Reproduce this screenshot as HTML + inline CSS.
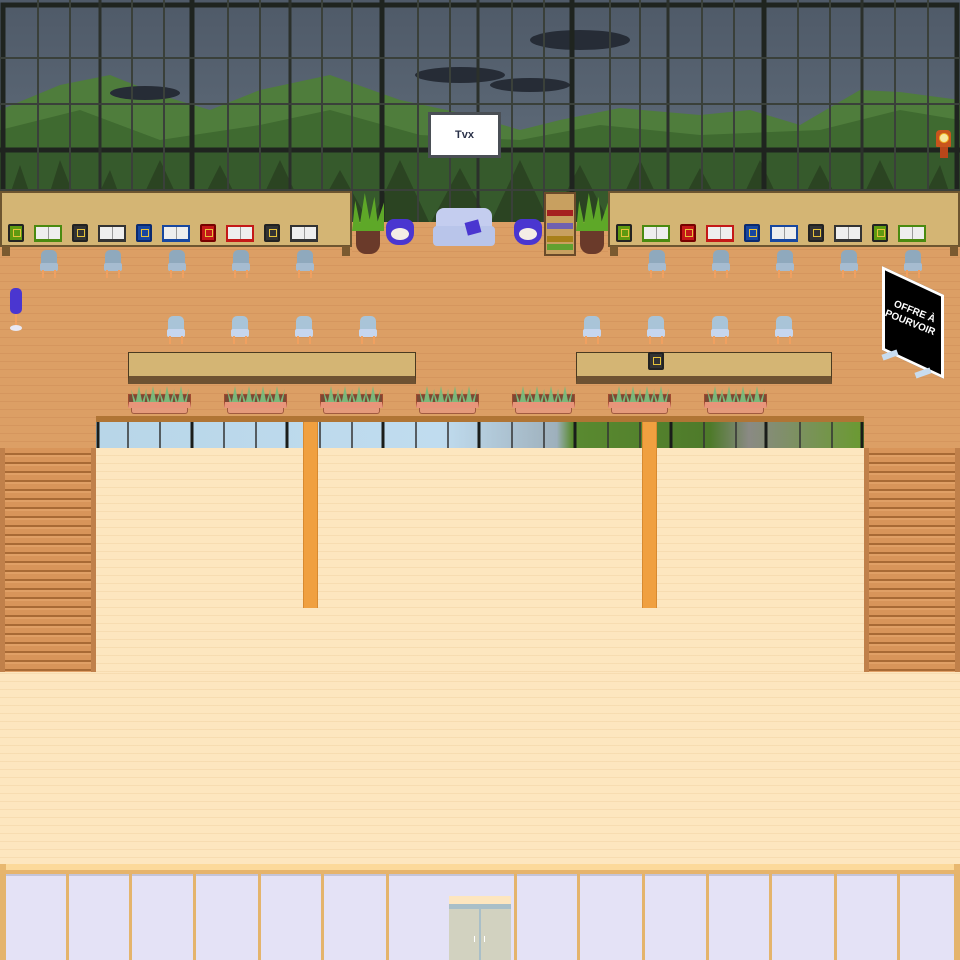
<!DOCTYPE html>
<html><head><meta charset="utf-8"><style>
*{margin:0;padding:0;box-sizing:border-box}
body{width:960px;height:960px;overflow:hidden;position:relative;background:#dc9f65;font-family:"Liberation Sans",sans-serif}
.a{position:absolute}
.floor{background-color:#dc9f65;background-image:repeating-linear-gradient(0deg,rgba(180,110,60,.18) 0 1px,transparent 1px 8px)}
.lfloor{background-color:#fde6bf;background-image:repeating-linear-gradient(0deg,rgba(235,200,150,.35) 0 1px,transparent 1px 8px)}
.desk{background:#d4b574;border:2px solid #6d5530}
.bk{position:absolute;top:224px;width:16px;height:18px;border:2px solid #222;border-radius:2px}
.bk::after{content:"";position:absolute;left:3px;top:3px;width:6px;height:6px;border:1px solid #e6c23a}
.ob{position:absolute;top:225px;width:28px;height:17px;background:#eee;border:2px solid #333;border-bottom-width:3px}
.ob::after{content:"";position:absolute;left:12px;top:0;width:1px;height:12px;background:#999}
.ch{position:absolute;width:18px;height:28px}
.ch i{position:absolute;left:1px;top:0;width:16px;height:16px;background:#8fa9bd;border-radius:5px 5px 2px 2px}
.ch b{position:absolute;left:0;top:13px;width:18px;height:8px;background:#a6bcd0;border-radius:2px}
.ch u{position:absolute;left:2px;top:20px;width:14px;height:8px;border-left:2px solid #f0a060;border-right:2px solid #f0a060}
.ch2 i{background:#a9c4d8}.ch2 b{background:#c6d6ef}
.pl{position:absolute;top:388px;width:63px;height:26px}
.pl .box{position:absolute;left:0;top:6px;width:63px;height:14px;background:#7a4a34;border:1px solid #a04a30;border-bottom:6px solid #e8957a}
.pl .bot{position:absolute;left:3px;top:20px;width:57px;height:6px;background:#e49a7c;border:1px solid #a05a40;border-top:none;border-radius:0 0 3px 3px}
.pl .lf{position:absolute;top:-2px;width:16px;height:16px;background:#7cb87a;clip-path:polygon(0 20%,30% 100%,50% 0,70% 100%,100% 15%,85% 100%,15% 100%)}
.pan{position:absolute;top:874px;height:86px;width:3px;background:#e4b46c}
</style></head><body>
<div class="a floor" style="left:0;top:220px;width:960px;height:230px"></div>

<svg class="a" style="left:0;top:0" width="960" height="224" viewBox="0 0 960 224">
<defs><linearGradient id="sk" x1="0" y1="0" x2="0" y2="1"><stop offset="0" stop-color="#4f5a68"/><stop offset="1" stop-color="#63707e"/></linearGradient></defs>
<rect width="960" height="224" fill="url(#sk)"/>
<path d="M0 110 L60 85 L110 75 L160 95 L210 110 L260 90 L330 75 L400 100 L470 115 L520 130 L560 120 L620 108 L700 115 L750 110 L800 125 L860 90 L900 92 L960 100 L960 224 L0 224Z" fill="#4f7d3c"/>
<path d="M0 130 L80 110 L160 140 L260 125 L330 110 L420 135 L520 140 L600 125 L700 135 L820 130 L900 110 L960 120 L960 224 L0 224Z" fill="#3f6a30"/>
<rect y="150" width="960" height="74" fill="#365a2c"/>
<path d="M0 224 L20 165 L40 224 L60 160 L85 224 L110 170 L130 224 L160 160 L190 224 L220 165 L250 224 L280 160 L310 224 L340 170 L370 224 L400 160 L430 224 L460 168 L490 224 L520 160 L550 224 L580 165 L610 224 L640 160 L670 224 L700 168 L730 224 L760 160 L790 224 L820 165 L850 224 L880 160 L910 224 L940 165 L960 224Z" fill="#2b4422"/>
<ellipse cx="145" cy="93" rx="35" ry="7" fill="#262c36"/>
<ellipse cx="580" cy="40" rx="50" ry="10" fill="#262c36"/>
<ellipse cx="460" cy="75" rx="45" ry="8" fill="#262c36"/>
<ellipse cx="530" cy="85" rx="40" ry="7" fill="#262c36"/>
<g fill="none" stroke="#1f241f" stroke-width="5">
<rect x="3" y="5" width="954" height="250"/>
<path d="M192 0V224M382 0V224M572 0V224M764 0V224M0 150H960"/>
</g>
<g fill="none" stroke="#2b302b" stroke-width="3">
<path d="M100 0V224M290 0V224M478 0V224M668 0V224M862 0V224"/>
</g>
<g fill="none" stroke="#3a403a" stroke-width="2">
<path d="M38 0V224M70 0V224M132 0V224M164 0V224M228 0V224M260 0V224M322 0V224M352 0V224M418 0V224M450 0V224M512 0V224M544 0V224M610 0V224M640 0V224M702 0V224M734 0V224M798 0V224M830 0V224M895 0V224M928 0V224M0 58H960M0 104H960M0 190H960"/>
</g>
</svg>

<!-- TV -->
<div class="a" style="left:428px;top:112px;width:73px;height:46px;background:#fff;border:3px solid #4a4f55;text-align:center;font-size:11px;font-weight:bold;color:#2a3148;line-height:40px">Tvx</div>
<!-- clock -->
<div class="a" style="left:936px;top:130px;width:15px;height:17px;background:#c9541c;border-radius:4px 4px 1px 1px"></div>
<div class="a" style="left:939px;top:133px;width:10px;height:10px;background:#f6e6a0;border-radius:50%;border:1px solid #f0b020"></div>
<div class="a" style="left:940px;top:147px;width:8px;height:11px;background:#b8461a"></div>

<div class="a floor" style="left:352px;top:222px;width:256px;height:30px"></div>

<!-- desks -->
<div class="a desk" style="left:0;top:191px;width:352px;height:56px"></div>
<div class="a" style="left:2px;top:246px;width:8px;height:10px;background:#7a5a30"></div>
<div class="a" style="left:342px;top:246px;width:8px;height:10px;background:#7a5a30"></div>
<div class="a desk" style="left:608px;top:191px;width:352px;height:56px"></div>
<div class="a" style="left:610px;top:246px;width:8px;height:10px;background:#7a5a30"></div>
<div class="a" style="left:950px;top:246px;width:8px;height:10px;background:#7a5a30"></div>

<div class="bk" style="left:8px;background:#5f9a10"></div>
<div class="ob" style="left:34px;border-color:#4a8a10"></div>
<div class="bk" style="left:72px;background:#333"></div>
<div class="ob" style="left:98px;border-color:#333"></div>
<div class="bk" style="left:136px;background:#1747a0;border-color:#0a2a70"></div>
<div class="ob" style="left:162px;border-color:#1747a0"></div>
<div class="bk" style="left:200px;background:#c41818;border-color:#700"></div>
<div class="ob" style="left:226px;border-color:#c41818"></div>
<div class="bk" style="left:264px;background:#333"></div>
<div class="ob" style="left:290px;border-color:#333"></div>

<div class="bk" style="left:616px;background:#5f9a10"></div>
<div class="ob" style="left:642px;border-color:#4a8a10"></div>
<div class="bk" style="left:680px;background:#c41818;border-color:#700"></div>
<div class="ob" style="left:706px;border-color:#c41818"></div>
<div class="bk" style="left:744px;background:#1747a0;border-color:#0a2a70"></div>
<div class="ob" style="left:770px;border-color:#1747a0"></div>
<div class="bk" style="left:808px;background:#333"></div>
<div class="ob" style="left:834px;border-color:#333"></div>
<div class="bk" style="left:872px;background:#5f9a10"></div>
<div class="ob" style="left:898px;border-color:#4a8a10"></div>

<!-- plants, chairs, sofa, bookcase -->
<div class="a" style="left:356px;top:228px;width:24px;height:26px;background:#6a3a2a;border-radius:3px 3px 10px 10px"></div>
<div class="a" style="left:352px;top:193px;width:32px;height:38px;background:#5ea828;clip-path:polygon(0 100%,10% 20%,25% 80%,40% 0,55% 70%,70% 10%,80% 75%,100% 25%,100% 100%)"></div>
<div class="a" style="left:580px;top:228px;width:24px;height:26px;background:#6a3a2a;border-radius:3px 3px 10px 10px"></div>
<div class="a" style="left:576px;top:193px;width:32px;height:38px;background:#5ea828;clip-path:polygon(0 100%,10% 20%,25% 80%,40% 0,55% 70%,70% 10%,80% 75%,100% 25%,100% 100%)"></div>
<div class="a" style="left:386px;top:219px;width:28px;height:26px;background:#4a36d0;border-radius:8px 8px 12px 12px"></div>
<div class="a" style="left:391px;top:228px;width:18px;height:12px;background:#f4eee6;border-radius:50%"></div>
<div class="a" style="left:514px;top:219px;width:28px;height:26px;background:#4a36d0;border-radius:8px 8px 12px 12px"></div>
<div class="a" style="left:519px;top:228px;width:18px;height:12px;background:#f4eee6;border-radius:50%"></div>
<div class="a" style="left:436px;top:208px;width:56px;height:20px;background:#c4cdef;border-radius:8px 8px 2px 2px"></div>
<div class="a" style="left:433px;top:226px;width:62px;height:20px;background:#b9c5ea;border-radius:4px"></div>
<div class="a" style="left:466px;top:221px;width:14px;height:13px;background:#4a36d0;transform:rotate(-15deg)"></div>
<div class="a" style="left:544px;top:192px;width:32px;height:64px;background:#c8a060;border:2px solid #6a4a2a"></div>
<div class="a" style="left:547px;top:210px;width:26px;height:6px;background:#a52020"></div>
<div class="a" style="left:547px;top:223px;width:26px;height:6px;background:#7060b0"></div>
<div class="a" style="left:547px;top:236px;width:26px;height:6px;background:#a8801a"></div>
<div class="a" style="left:547px;top:244px;width:26px;height:6px;background:#60a030"></div>

<div class="ch" style="left:40px;top:250px"><i></i><b></b><u></u></div>
<div class="ch" style="left:104px;top:250px"><i></i><b></b><u></u></div>
<div class="ch" style="left:168px;top:250px"><i></i><b></b><u></u></div>
<div class="ch" style="left:232px;top:250px"><i></i><b></b><u></u></div>
<div class="ch" style="left:296px;top:250px"><i></i><b></b><u></u></div>
<div class="ch" style="left:648px;top:250px"><i></i><b></b><u></u></div>
<div class="ch" style="left:712px;top:250px"><i></i><b></b><u></u></div>
<div class="ch" style="left:776px;top:250px"><i></i><b></b><u></u></div>
<div class="ch" style="left:840px;top:250px"><i></i><b></b><u></u></div>
<div class="ch" style="left:904px;top:250px"><i></i><b></b><u></u></div>

<div class="ch ch2" style="left:167px;top:316px"><i></i><b></b><u></u></div>
<div class="ch ch2" style="left:231px;top:316px"><i></i><b></b><u></u></div>
<div class="ch ch2" style="left:295px;top:316px"><i></i><b></b><u></u></div>
<div class="ch ch2" style="left:359px;top:316px"><i></i><b></b><u></u></div>
<div class="ch ch2" style="left:583px;top:316px"><i></i><b></b><u></u></div>
<div class="ch ch2" style="left:647px;top:316px"><i></i><b></b><u></u></div>
<div class="ch ch2" style="left:711px;top:316px"><i></i><b></b><u></u></div>
<div class="ch ch2" style="left:775px;top:316px"><i></i><b></b><u></u></div>

<!-- purple stand -->
<div class="a" style="left:10px;top:288px;width:12px;height:26px;background:#4a36d0;border-radius:5px"></div>
<div class="a" style="left:15px;top:314px;width:2px;height:12px;background:#f0a060"></div>
<div class="a" style="left:10px;top:325px;width:12px;height:6px;background:#e8e8f4;border-radius:50%"></div>

<!-- lower desks -->
<div class="a" style="left:128px;top:352px;width:288px;height:32px;background:#d4b574;border:1px solid #4a3a20;border-bottom:8px solid #6e5232"></div>
<div class="a" style="left:576px;top:352px;width:256px;height:32px;background:#d4b574;border:1px solid #4a3a20;border-bottom:8px solid #6e5232"></div>
<div class="bk" style="left:648px;top:352px;background:#333"></div>

<!-- sign -->
<div class="a" style="left:882px;top:266px;width:62px;height:84px;background:#000;border:3px solid #fff;transform:skewY(25deg);transform-origin:0 0"></div>
<div class="a" style="left:878px;top:306px;width:68px;color:#fff;font-size:10px;font-weight:bold;text-align:center;line-height:12px;transform:rotate(22deg)">OFFRE À<br>POURVOIR</div>
<div class="a" style="left:882px;top:352px;width:16px;height:6px;background:#c8dcef;transform:rotate(-20deg)"></div>
<div class="a" style="left:915px;top:370px;width:16px;height:6px;background:#c8dcef;transform:rotate(-20deg)"></div>

<!-- planters -->
<div class="pl" style="left:128px"><div class="box"></div><div class="bot"></div><i class="lf" style="left:3px"></i><i class="lf" style="left:17px"></i><i class="lf" style="left:31px"></i><i class="lf" style="left:45px"></i></div>
<div class="pl" style="left:224px"><div class="box"></div><div class="bot"></div><i class="lf" style="left:3px"></i><i class="lf" style="left:17px"></i><i class="lf" style="left:31px"></i><i class="lf" style="left:45px"></i></div>
<div class="pl" style="left:320px"><div class="box"></div><div class="bot"></div><i class="lf" style="left:3px"></i><i class="lf" style="left:17px"></i><i class="lf" style="left:31px"></i><i class="lf" style="left:45px"></i></div>
<div class="pl" style="left:416px"><div class="box"></div><div class="bot"></div><i class="lf" style="left:3px"></i><i class="lf" style="left:17px"></i><i class="lf" style="left:31px"></i><i class="lf" style="left:45px"></i></div>
<div class="pl" style="left:512px"><div class="box"></div><div class="bot"></div><i class="lf" style="left:3px"></i><i class="lf" style="left:17px"></i><i class="lf" style="left:31px"></i><i class="lf" style="left:45px"></i></div>
<div class="pl" style="left:608px"><div class="box"></div><div class="bot"></div><i class="lf" style="left:3px"></i><i class="lf" style="left:17px"></i><i class="lf" style="left:31px"></i><i class="lf" style="left:45px"></i></div>
<div class="pl" style="left:704px"><div class="box"></div><div class="bot"></div><i class="lf" style="left:3px"></i><i class="lf" style="left:17px"></i><i class="lf" style="left:31px"></i><i class="lf" style="left:45px"></i></div>

<!-- beam and window strip -->
<div class="a" style="left:96px;top:416px;width:768px;height:6px;background:#b07535"></div>
<div class="a" style="left:96px;top:422px;width:768px;height:26px;background:linear-gradient(90deg,#b8d6e8 0,#c0dcef 45%,#9eb0bc 60%,#5a8a30 62%,#4e7a2a 80%,#8a8a84 85%,#6a9a30 100%)"></div>
<svg class="a" style="left:96px;top:422px" width="768" height="26"><g stroke="#1a1d1a" stroke-width="3"><path d="M2 0V26M96 0V26M191 0V26M287 0V26M383 0V26M479 0V26M575 0V26M670 0V26M766 0V26"/></g><g stroke="#333" stroke-width="1.5"><path d="M32 0V26M64 0V26M128 0V26M160 0V26M224 0V26M256 0V26M320 0V26M352 0V26M416 0V26M448 0V26M512 0V26M544 0V26M608 0V26M640 0V26M704 0V26M736 0V26"/></g></svg>

<!-- light floor -->
<div class="a lfloor" style="left:96px;top:448px;width:768px;height:224px"></div>
<div class="a lfloor" style="left:0;top:672px;width:960px;height:194px"></div>
<!-- pillars -->
<div class="a" style="left:303px;top:422px;width:15px;height:186px;background:#f0a040;border-left:1px solid #d88a30;border-right:1px solid #d88a30"></div>
<div class="a" style="left:642px;top:422px;width:15px;height:186px;background:#f0a040;border-left:1px solid #d88a30;border-right:1px solid #d88a30"></div>
<!-- stairs -->
<div class="a" style="left:0;top:448px;width:96px;height:224px;background:repeating-linear-gradient(180deg,#d8955a 0 5px,#a86a35 5px 7px,#e0a066 7px 9px);border-left:5px solid #c0804a;border-right:5px solid #c0804a"></div>
<div class="a" style="left:864px;top:448px;width:96px;height:224px;background:repeating-linear-gradient(180deg,#d8955a 0 5px,#a86a35 5px 7px,#e0a066 7px 9px);border-left:5px solid #c0804a;border-right:5px solid #c0804a"></div>

<!-- bottom wall -->
<div class="a" style="left:0;top:864px;width:960px;height:8px;background:#fcd99a;border-left:6px solid #e8b870;border-right:6px solid #e8b870"></div>
<div class="a" style="left:0;top:870px;width:960px;height:4px;background:#e6b46c"></div>
<div class="a" style="left:0;top:874px;width:960px;height:86px;background:#e4e2f6;border-top:2px solid #c4c4d8"></div>
<div class="a" style="left:0;top:874px;width:6px;height:86px;background:#e4b46c"></div>
<div class="a" style="left:954px;top:874px;width:6px;height:86px;background:#e4b46c"></div>
<div class="pan" style="left:66px"></div><div class="pan" style="left:129px"></div><div class="pan" style="left:193px"></div>
<div class="pan" style="left:258px"></div><div class="pan" style="left:321px"></div><div class="pan" style="left:386px"></div>
<div class="pan" style="left:514px"></div><div class="pan" style="left:577px"></div><div class="pan" style="left:642px"></div>
<div class="pan" style="left:706px"></div><div class="pan" style="left:769px"></div><div class="pan" style="left:834px"></div><div class="pan" style="left:897px"></div>
<div class="a" style="left:449px;top:896px;width:62px;height:8px;background:#fde6bf"></div>
<div class="a" style="left:449px;top:904px;width:62px;height:5px;background:#a9bfc8"></div>
<div class="a" style="left:449px;top:909px;width:62px;height:51px;background:#d2d2c0"></div>
<div class="a" style="left:479px;top:909px;width:2px;height:51px;background:#a9bfc8"></div>
<div class="a" style="left:474px;top:936px;width:1px;height:6px;background:#fff"></div>
<div class="a" style="left:484px;top:936px;width:1px;height:6px;background:#fff"></div>
</body></html>
